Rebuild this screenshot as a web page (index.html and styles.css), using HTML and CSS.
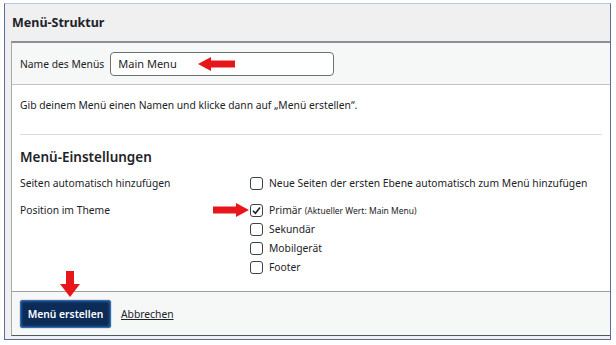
FILE: index.html
```html
<!DOCTYPE html>
<html lang="de">
<head>
<meta charset="UTF-8">
<meta name="viewport" content="width=device-width, initial-scale=1.0">
<title>Menü-Struktur</title>
<link rel="stylesheet" href="styles.css">
</head>
<body>
    <div class="frame">
        <div class="frame-head">Menü-Struktur</div>
        <div class="box">
            <div class="name-row">
                <label class="name-label" for="menuName">Name des Menüs</label>
                <div class="name-field">
                    <input class="name-input" id="menuName" type="text" value="Main Menu">
                    <svg class="arrow arrow-left" width="37" height="14" viewBox="0 0 37 14"><path d="M0 7 L13 0 L13 3.5 L37 3.5 L37 10.5 L13 10.5 L13 14 Z" fill="#e8161b"/></svg>
                </div>
            </div>
            <div class="content">
                <p class="hint">Gib deinem Menü einen Namen und klicke dann auf „Menü erstellen“.</p>
                <div class="settings">
                    <h3 class="settings-title">Menü-Einstellungen</h3>
                    <div class="setting">
                        <div class="setting-name">Seiten automatisch hinzufügen</div>
                        <div class="setting-opts">
                            <label class="opt"><span class="check"></span>Neue Seiten der ersten Ebene automatisch zum Menü hinzufügen</label>
                        </div>
                    </div>
                    <div class="setting setting-theme">
                        <div class="setting-name">Position im Theme</div>
                        <div class="setting-opts">
                            <svg class="arrow arrow-right" width="36" height="14" viewBox="0 0 36 14"><path d="M36 7 L23 0 L23 3.5 L0 3.5 L0 10.5 L23 10.5 L23 14 Z" fill="#e8161b"/></svg>
                            <label class="opt"><span class="check checked"><svg width="11" height="11" viewBox="0 0 11 11"><path d="M2 5.8 L4.4 8.3 L9 2.6" fill="none" stroke="#1d2327" stroke-width="1.6"/></svg></span>Primär <small>(Aktueller Wert: Main Menu)</small></label>
                            <label class="opt"><span class="check"></span>Sekundär</label>
                            <label class="opt"><span class="check"></span>Mobilgerät</label>
                            <label class="opt"><span class="check"></span>Footer</label>
                        </div>
                    </div>
                </div>
            </div>
            <div class="footer">
                <svg class="arrow arrow-down" width="20" height="26" viewBox="0 0 20 26"><path d="M10 26 L0 13 L6 13 L6 0 L14 0 L14 13 L20 13 Z" fill="#e8161b"/></svg>
                <button class="btn-primary">Menü erstellen</button>
                <a class="cancel" href="#">Abbrechen</a>
            </div>
        </div>
    </div>
</body>
</html>
```
FILE: styles.css
```css
body {
    margin: 0;
    background: #fff;
    font-family: "Noto Sans", "Open Sans", sans-serif;
    font-size: 10.3px;
    color: #1d2327;
}
.frame {
    margin: 3px 5px 0 4px;
    height: 337px;
    box-sizing: border-box;
    border: 1px solid #5b6b9c;
    border-top-color: #b8c8e8;
    background: #f0f0f1;
    display: flex;
    flex-direction: column;
}
.frame-head {
    flex-shrink: 0;
    height: 37px;
    display: flex;
    align-items: center;
    padding-left: 7px;
    font-size: 12.5px;
    font-weight: 700;
    color: #1d2327;
}
.box {
    flex: 1;
    margin-left: 6px;
    margin-bottom: 3px;
    border-top: 2px solid #8c8f94;
    border-left: 1px solid #a7aaad;
    border-bottom: 1px solid #50575e;
    background: #fff;
    display: flex;
    flex-direction: column;
}
.name-row {
    flex-shrink: 0;
    height: 41px;
    background: #f6f7f7;
    border-bottom: 1px solid #c3c4c7;
    display: flex;
    align-items: center;
    padding-left: 8px;
}
.name-label {
    margin-right: 6px;
}
.name-field {
    position: relative;
}
.name-input {
    display: block;
    width: 224px;
    height: 24px;
    box-sizing: border-box;
    border: 1px solid #6e7277;
    border-radius: 4px;
    padding: 0 7px;
    font-family: inherit;
    font-size: 11px;
    color: #1d2327;
    background: #fff;
}
.arrow {
    position: absolute;
}
.arrow-left {
    left: 88px;
    top: 5px;
}
.content {
    flex: 1;
    padding: 0 8px;
}
.hint {
    margin: 13px 0 0;
    line-height: 15px;
    padding-bottom: 21px;
    border-bottom: 1px solid #dcdcde;
}
.settings-title {
    margin: 12px 0 8px;
    font-size: 13.5px;
    line-height: 20px;
    font-weight: 600;
}
.setting {
    display: flex;
    margin-bottom: 10px;
}
.setting-name {
    width: 230px;
    line-height: 17px;
}
.setting-opts {
    position: relative;
    display: flex;
    flex-direction: column;
    gap: 2px;
}
.arrow-right {
    left: -37px;
    top: 1px;
}
.opt {
    display: flex;
    align-items: center;
    line-height: 17px;
    white-space: nowrap;
}
.opt small {
    font-size: 8.5px;
    margin-left: 3px;
}
.check {
    width: 13px;
    height: 13px;
    box-sizing: border-box;
    border: 1px solid #3c434a;
    border-radius: 3px;
    margin-right: 6px;
    display: flex;
    align-items: center;
    justify-content: center;
    background: #fff;
}
.footer {
    flex-shrink: 0;
    position: relative;
    height: 43px;
    border-top: 1px solid #9a9da1;
    background: #f6f7f7;
    display: flex;
    align-items: center;
    padding-left: 8px;
}
.arrow-down {
    left: 48px;
    top: -21px;
}
.btn-primary {
    width: 91px;
    height: 28px;
    padding: 0;
    border: 1px solid #2e6db4;
    border-radius: 3px;
    background: #0c2b57;
    box-shadow: inset 0 0 3px #3d7cc6, 0 0 1px #021833;
    color: #fff;
    font-family: inherit;
    font-size: 10.3px;
    font-weight: 600;
}
.cancel {
    margin-left: 10px;
    color: #1d2327;
    text-decoration: underline;
}
```
